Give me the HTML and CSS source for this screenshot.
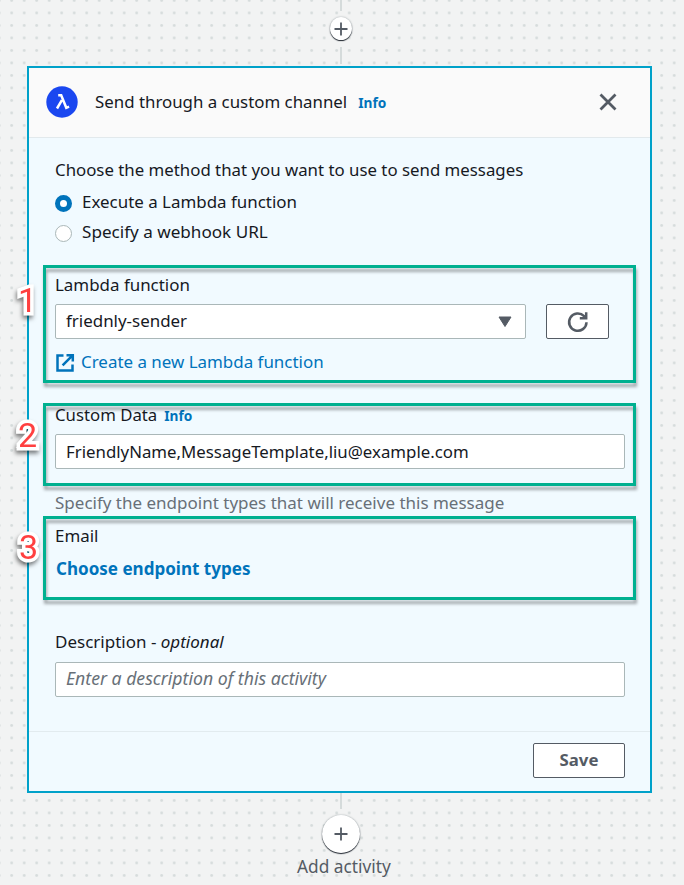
FILE: index.html
```html
<!DOCTYPE html>
<html lang="en">
<head>
<meta charset="utf-8">
<title>Send through a custom channel</title>
<link rel="stylesheet" href="styles.css">
</head>
<body>
<main class="canvas">
  <div class="link link-top"></div>
  <button class="add add-small" aria-label="Insert activity">
    <svg width="14" height="14" viewBox="0 0 14 14"><path d="M7 0.5v13M0.5 7h13"/></svg>
  </button>
  <div class="link link-mid"></div>

  <section class="card">
    <header class="card-head">
      <svg class="lambda" width="32" height="32" viewBox="0 0 32 32">
        <circle cx="16" cy="16" r="15.7"/>
        <path d="M12.2 9.2h3l5.1 12.6 2.8-1.1M15.9 14.2l-4.9 8.3"/>
      </svg>
      <h1 class="title">Send through a custom channel</h1>
      <a class="info">Info</a>
      <button class="close" aria-label="Close">
        <svg width="18" height="18" viewBox="0 0 18 18"><path d="M1.5 1.5l15 15M16.5 1.5l-15 15"/></svg>
      </button>
    </header>

    <div class="card-body">
      <p class="line method">Choose the method that you want to use to send messages</p>
      <label class="line radio"><span class="dot dot-on"></span><span class="t-exec">Execute a Lambda function</span></label>
      <label class="line radio radio-last"><span class="dot"></span><span class="t-hook">Specify a webhook URL</span></label>

      <div class="group group-lambda">
        <p class="line">Lambda function</p>
        <div class="row">
          <div class="field select"><span>friednly-sender</span>
            <svg width="14" height="12" viewBox="0 0 14 12"><path d="M1 1h12L7 10.5z"/></svg>
          </div>
          <button class="btn refresh" aria-label="Refresh">
            <svg width="22" height="22" viewBox="0 0 22 22"><path d="M19.5 11.3a8.7 8.7 0 1 1-2.4-6.2l1.4 1.6M19.2 1.2v6h-6.4"/></svg>
          </button>
        </div>
        <a class="line create">
          <svg width="18" height="18" viewBox="0 0 18 18"><path d="M7.5 1.5h-6v15h15v-6M10.5 1.2h6.3v6.3M16.3 1.7L6.6 11.4"/></svg>
          <span>Create a new Lambda function</span>
        </a>
        <span class="mark mark-1">1</span>
      </div>

      <div class="group group-data">
        <p class="line"><span class="t-data">Custom Data</span><a class="info info-data">Info</a></p>
        <div class="field t-value">FriendlyName,MessageTemplate,liu@example.com</div>
        <span class="mark mark-2">2</span>
      </div>

      <p class="line specify">Specify the endpoint types that will receive this message</p>

      <div class="group group-email">
        <p class="line t-email">Email</p>
        <a class="line choose">Choose endpoint types</a>
        <span class="mark mark-3">3</span>
      </div>

      <p class="line desc">Description - <em>optional</em></p>
      <div class="field placeholder">Enter a description of this activity</div>
    </div>

    <footer class="card-foot"><button class="btn save">Save</button></footer>
  </section>

  <div class="link link-end"></div>
  <button class="add add-large" aria-label="Add activity">
    <svg width="14" height="14" viewBox="0 0 14 14"><path d="M7 0.5v13M0.5 7h13"/></svg>
  </button>
  <p class="add-label">Add activity</p>
</main>
</body>
</html>
```
FILE: styles.css
```css
* { box-sizing: border-box; }
body, p, h1 { margin: 0; }
button { padding: 0; border: 0; font: inherit; }
svg { display: block; flex: none; overflow: visible; }
body {
  font-family: "Noto Sans", sans-serif;
  font-size: 16.93px;
  line-height: 24px;
  color: #16191f;
}
.canvas {
  height: 885px;
  overflow: hidden;
  padding-left: 27px;
  background: #f2f3f3 radial-gradient(circle at center, #d5dbdb 0.9px, rgba(213,219,219,0) 1.8px) 5.45px -5.85px / 12.5px 12.5px;
}
.link { width: 2px; margin-left: 313px; background: #d5dbdb; }
.link-top { height: 11px; }
.link-mid { height: 17px; }
.link-end { height: 16px; }
.add {
  display: flex;
  align-items: center;
  justify-content: center;
  border-radius: 50%;
  background: #fff;
  box-shadow: 0 1px 1px #222831, 0 0 2px rgba(0,28,36,.35);
}
.add path { fill: none; stroke: #545b64; stroke-width: 1.8; }
.add-small { width: 22px; height: 23px; margin: 6px 0 7px 303px; }
.add-large { width: 38px; height: 38px; margin: 6px 0 0 295px; }
.add-label {
  width: 94px;
  margin: 2px 0 0 270px;
  font-size: 17.3px;
  white-space: nowrap;
  color: #545b64;
}

.card {
  width: 625px;
  height: 727px;
  margin-top: 2px;
  border: 2px solid #00a1c9;
  background: #f1faff;
}
.card-head {
  display: flex;
  align-items: center;
  height: 70px;
  padding: 0 33px 1px 17px;
  border-bottom: 1px solid #e2e9ec;
  background: #fafafa;
}
.lambda circle { fill: #1a47f0; }
.lambda path { fill: none; stroke: #fff; stroke-width: 2.5; }
.title { margin: 0 0 1px 17px; font-size: 16.85px; font-weight: 400; }
.info { margin: 2px 0 0 11px; font-size: 13.7px; font-weight: 700; color: #0073bb; }
.close { margin-left: auto; background: none; }
.close path { stroke: #545b64; stroke-width: 2.8; }

.card-body { height: 593px; padding: 20px 25px 0 26px; }
.line { display: flex; align-items: center; height: 24px; white-space: nowrap; }
.method { font-size: 16.82px; }
.radio { margin-top: 8px; gap: 10px; }
.radio-last { margin-top: 6px; }
.t-hook { font-size: 17.1px; }
.dot {
  width: 17px;
  height: 17px;
  margin-top: 2px;
  border: 1px solid #aab7b8;
  border-radius: 50%;
  background: #fff;
}
.dot-on { border: 5px solid #0073bb; }

.group {
  position: relative;
  width: 593px;
  margin-left: -12px;
  padding: 3px 0 0 12px;
}
.group::after {
  content: "";
  position: absolute;
  inset: 0;
  border: 3px solid #00b090;
  filter: drop-shadow(1px 4px 1.5px rgba(0,0,0,.32));
  pointer-events: none;
}
.group-lambda { height: 118px; margin-top: 21px; padding-top: 8px; }
.group-data { height: 83px; margin-top: 20px; padding-top: 0; }
.group-email { height: 84px; margin-top: 1px; padding-top: 8px; }
.row { display: flex; gap: 20px; margin-top: 7px; }
.field {
  display: flex;
  align-items: center;
  width: 570px;
  height: 35px;
  padding: 0 10px;
  border: 1px solid #aab7b8;
  border-radius: 2px;
  background: #fff;
  white-space: nowrap;
}
.select { width: 471px; padding-right: 13px; justify-content: space-between; }
.select span { margin-bottom: 2px; }
.select path { fill: #545b64; stroke: #545b64; stroke-linejoin: round; }
.btn {
  display: flex;
  align-items: center;
  justify-content: center;
  height: 35px;
  border: 1px solid #545b64;
  border-radius: 2px;
  background: #fff;
}
.refresh { width: 63px; }
.refresh path { fill: none; stroke: #545b64; stroke-width: 2.5; }
.create { margin-top: 11px; gap: 7px; padding-left: 1px; color: #0073bb; }
.create svg { margin-top: 1px; }
.create path { fill: none; stroke: #0073bb; stroke-width: 2.5; }
.t-data { font-size: 16.75px; }
.info-data { margin-left: 7px; }
.t-value { margin-top: 7px; font-size: 16.82px; }
.specify { margin-top: 5px; font-size: 17px; color: #687078; }
.t-email { font-size: 16.9px; }
.choose { margin: 9px 0 0 1px; font-size: 17.05px; font-weight: 700; color: #0073bb; }
.desc { margin-top: 30px; font-size: 17px; white-space: pre; }
.placeholder { margin-top: 8px; padding-bottom: 3px; font-size: 17.65px; font-style: italic; color: #687078; }
.card-foot {
  display: flex;
  justify-content: flex-end;
  height: 60px;
  padding: 11px 25px 0 0;
  border-top: 1px solid #e2ebef;
}
.save { width: 92px; padding-bottom: 2px; font-size: 16.8px; font-weight: 700; color: #545b64; }

.mark {
  position: absolute;
  z-index: 1;
  left: -25px;
  font: 400 34px/34px Roboto, sans-serif;
  color: #ff4040;
  -webkit-text-stroke: 7px #fff;
  stroke-linejoin: round;
  paint-order: stroke fill;
  filter: drop-shadow(-1px 3px 2px rgba(0,0,0,.5));
}
.mark-1 { top: 18px; }
.mark-2 { top: 15px; }
.mark-3 { top: 14px; left: -24px; }
```
